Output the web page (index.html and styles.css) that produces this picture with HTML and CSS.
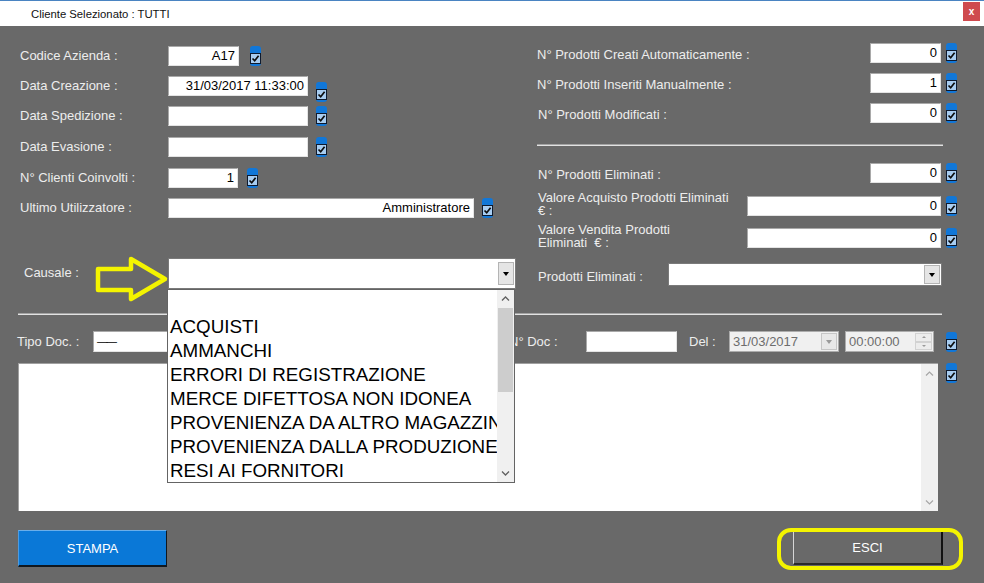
FILE: index.html
```html
<!DOCTYPE html>
<html lang="it">
<head>
    <meta charset="UTF-8">
    <title>Cliente Selezionato : TUTTI</title>
    <link rel="stylesheet" href="styles.css">
</head>
<body>
<div class="window">
    <div class="titlebar">
        <span class="title">Cliente Selezionato : TUTTI</span>
        <span class="close">x</span>
    </div>

    <div class="form">
        <div class="top">
            <!-- colonna sinistra -->
            <div class="col-left">
                <div class="row">
                    <span class="lbl">Codice Azienda :</span>
                    <div class="field w71">A17</div>
                    <span class="chk ml11"><span class="box"><svg viewBox="0 0 9 9"><path d="M1.5 4.5 3.7 6.8 7.6 1.8"/></svg></span></span>
                </div>
                <div class="row">
                    <span class="lbl">Data Creazione :</span>
                    <div class="field w140">31/03/2017 11:33:00</div>
                    <span class="chk ml8 low"><span class="box"><svg viewBox="0 0 9 9"><path d="M1.5 4.5 3.7 6.8 7.6 1.8"/></svg></span></span>
                </div>
                <div class="row">
                    <span class="lbl">Data Spedizione :</span>
                    <div class="field w140"></div>
                    <span class="chk ml8"><span class="box"><svg viewBox="0 0 9 9"><path d="M1.5 4.5 3.7 6.8 7.6 1.8"/></svg></span></span>
                </div>
                <div class="row mt11">
                    <span class="lbl">Data Evasione :</span>
                    <div class="field w140"></div>
                    <span class="chk ml8"><span class="box"><svg viewBox="0 0 9 9"><path d="M1.5 4.5 3.7 6.8 7.6 1.8"/></svg></span></span>
                </div>
                <div class="row mt11">
                    <span class="lbl">N° Clienti Coinvolti :</span>
                    <div class="field w70">1</div>
                    <span class="chk ml9"><span class="box"><svg viewBox="0 0 9 9"><path d="M1.5 4.5 3.7 6.8 7.6 1.8"/></svg></span></span>
                </div>
                <div class="row">
                    <span class="lbl">Ultimo Utilizzatore :</span>
                    <div class="field w306">Amministratore</div>
                    <span class="chk ml8"><span class="box"><svg viewBox="0 0 9 9"><path d="M1.5 4.5 3.7 6.8 7.6 1.8"/></svg></span></span>
                </div>
                <div class="row causale">
                    <span class="lbl lbl-causale">Causale :</span>
                    <div class="combo w347">
                        <span class="combo-btn"><span class="tri"></span></span>
                    </div>
                </div>
            </div>

            <!-- colonna destra -->
            <div class="col-right">
                <div class="row">
                    <span class="lbl">N° Prodotti Creati Automaticamente :</span>
                    <div class="grp">
                        <div class="field w71">0</div>
                        <span class="chk"><span class="box"><svg viewBox="0 0 9 9"><path d="M1.5 4.5 3.7 6.8 7.6 1.8"/></svg></span></span>
                    </div>
                </div>
                <div class="row mt9">
                    <span class="lbl">N° Prodotti Inseriti Manualmente :</span>
                    <div class="grp">
                        <div class="field w71">1</div>
                        <span class="chk"><span class="box"><svg viewBox="0 0 9 9"><path d="M1.5 4.5 3.7 6.8 7.6 1.8"/></svg></span></span>
                    </div>
                </div>
                <div class="row mt9">
                    <span class="lbl indent">N° Prodotti Modificati :</span>
                    <div class="grp">
                        <div class="field w71">0</div>
                        <span class="chk"><span class="box"><svg viewBox="0 0 9 9"><path d="M1.5 4.5 3.7 6.8 7.6 1.8"/></svg></span></span>
                    </div>
                </div>

                <div class="sep sep-right"></div>

                <div class="row mt16">
                    <span class="lbl indent">N° Prodotti Eliminati :</span>
                    <div class="grp">
                        <div class="field w71">0</div>
                        <span class="chk"><span class="box"><svg viewBox="0 0 9 9"><path d="M1.5 4.5 3.7 6.8 7.6 1.8"/></svg></span></span>
                    </div>
                </div>
                <div class="row mt12">
                    <span class="lbl indent two-lines">Valore Acquisto Prodotti Eliminati<br>€ :</span>
                    <div class="grp">
                        <div class="field w194">0</div>
                        <span class="chk"><span class="box"><svg viewBox="0 0 9 9"><path d="M1.5 4.5 3.7 6.8 7.6 1.8"/></svg></span></span>
                    </div>
                </div>
                <div class="row mt11">
                    <span class="lbl indent two-lines">Valore Vendita Prodotti<br>Eliminati&nbsp; € :</span>
                    <div class="grp">
                        <div class="field w194">0</div>
                        <span class="chk"><span class="box"><svg viewBox="0 0 9 9"><path d="M1.5 4.5 3.7 6.8 7.6 1.8"/></svg></span></span>
                    </div>
                </div>
                <div class="row combo-row">
                    <span class="lbl indent lbl-prod">Prodotti Eliminati :</span>
                    <div class="combo w274">
                        <span class="combo-btn small"><span class="tri"></span></span>
                    </div>
                </div>
            </div>
        </div>

        <div class="sep sep-full"></div>

        <div class="doc-row">
            <span class="lbl lbl-tipo">Tipo Doc. :</span>
            <div class="field tipo"><span class="dash">——</span></div>
            <span class="lbl lbl-ndoc">N° Doc :</span>
            <div class="field w91"></div>
            <span class="lbl lbl-del">Del :</span>
            <div class="picker date">
                <span>31/03/2017</span>
                <span class="pick-btn"><span class="tri grey"></span></span>
            </div>
            <div class="picker time">
                <span>00:00:00</span>
                <span class="spin"><span class="spin-up"></span><span class="spin-down"></span></span>
            </div>
            <span class="chk ml12"><span class="box"><svg viewBox="0 0 9 9"><path d="M1.5 4.5 3.7 6.8 7.6 1.8"/></svg></span></span>
        </div>

        <div class="notes-row">
            <div class="notes">
                <div class="vscroll light">
                    <svg viewBox="0 0 9 5"><path d="M1 4.5 4.5 1 8 4.5"/></svg>
                    <svg viewBox="0 0 9 5"><path d="M1 .5 4.5 4 8 .5"/></svg>
                </div>
            </div>
            <span class="chk ml8 top"><span class="box"><svg viewBox="0 0 9 9"><path d="M1.5 4.5 3.7 6.8 7.6 1.8"/></svg></span></span>
        </div>

        <div class="buttons">
            <div class="btn btn-stampa">STAMPA</div>
            <div class="btn btn-esci">ESCI</div>
        </div>
    </div>

    <!-- lista aperta della combo Causale -->
    <div class="dropdown">
        <ul class="dd-items">
            <li></li>
            <li>ACQUISTI</li>
            <li>AMMANCHI</li>
            <li>ERRORI DI REGISTRAZIONE</li>
            <li>MERCE DIFETTOSA NON IDONEA</li>
            <li>PROVENIENZA DA ALTRO MAGAZZINO</li>
            <li>PROVENIENZA DALLA PRODUZIONE</li>
            <li>RESI AI FORNITORI</li>
        </ul>
        <div class="dd-scroll">
            <span class="arrow-cell"><svg viewBox="0 0 9 5"><path d="M1 4.5 4.5 1 8 4.5"/></svg></span>
            <span class="thumb"></span>
            <span class="arrow-cell bottom"><svg viewBox="0 0 9 5"><path d="M1 .5 4.5 4 8 .5"/></svg></span>
        </div>
    </div>

    <!-- annotazioni gialle -->
    <svg class="arrow" viewBox="0 0 74 48" width="74" height="48">
        <polygon points="3,13 36,13 36,3 70,23 36,43 36,34 3,34"/>
    </svg>
    <div class="highlight"></div>
</div>
</body>
</html>
```

FILE: styles.css
```css
* {
    margin: 0;
    padding: 0;
    box-sizing: border-box;
}

body {
    background-color: #696969;
    font-family: "Liberation Sans", Arial, sans-serif;
    font-size: 13px;
    color: #ededed;
}

.window {
    position: relative;
    width: 984px;
    height: 583px;
    overflow: hidden;
    background-color: #696969;
}

/* barra del titolo */
.titlebar {
    height: 26px;
    background-color: #fff;
    border-top: 1px solid #4a84c2;
    display: flex;
    align-items: center;
    justify-content: space-between;
    padding-left: 31px;
}

.title {
    color: #111;
    font-size: 11.3px;
}

.close {
    align-self: flex-start;
    margin-top: 1px;
    margin-right: 4px;
    width: 17px;
    height: 19px;
    background-color: #cf4a4e;
    color: #fff;
    font-size: 10px;
    font-weight: bold;
    display: flex;
    align-items: center;
    justify-content: center;
}

.form {
    padding-left: 18px;
}

.top {
    display: flex;
}

.col-left {
    width: 519px;
    padding-top: 20px;
}

.col-right {
    width: 423px;
    padding-top: 16px;
}

.row {
    display: flex;
    align-items: center;
    height: 20px;
    margin-top: 10px;
}

.col-left .row:first-child,
.col-right .row:first-child {
    margin-top: 0;
}

.col-right .row {
    height: 21px;
    justify-content: space-between;
    padding-right: 3px;
}

.col-right .lbl {
    margin-top: 3px;
}

.mt9 { margin-top: 9px; }
.mt11 { margin-top: 11px; }
.mt12 { margin-top: 12px; }
.mt16 { margin-top: 16px; }

.lbl {
    white-space: nowrap;
}

.col-left .lbl {
    width: 150px;
    padding-left: 2px;
    margin-top: -2px;
}

.col-left .lbl-causale {
    padding-left: 6px;
}

.indent {
    padding-left: 1px;
}

.col-right .two-lines {
    line-height: 13.5px;
    margin-top: -3px;
}

.grp {
    display: flex;
    align-items: center;
}

/* campi di testo */
.field {
    height: 100%;
    background-color: #fff;
    color: #000;
    border-top: 1px solid #a9a9a9;
    border-left: 1px solid #a9a9a9;
    border-right: 1px solid #e4e4e4;
    border-bottom: 1px solid #e4e4e4;
    line-height: 18px;
    padding: 0 3px;
    text-align: right;
    white-space: nowrap;
    overflow: hidden;
}

.w70 { width: 70px; }
.w71 { width: 71px; }
.w91 { width: 91px; }
.w140 { width: 140px; }
.w194 { width: 194px; }
.w306 { width: 306px; }

/* checkbox con alone blu */
.chk {
    flex: none;
    display: block;
    width: 11px;
    height: 20px;
    padding-top: 7px;
    margin-left: 5px;
    background-color: #1177d8;
    border-radius: 3px;
}

.ml8 { margin-left: 8px; }
.ml9 { margin-left: 9px; }
.ml11 { margin-left: 11px; }
.ml12 { margin-left: 12px; }

.chk.low {
    align-self: flex-end;
    margin-bottom: -6px;
}

.chk.top {
    align-self: flex-start;
}

.box {
    display: block;
    width: 11px;
    height: 11px;
    border: 1px solid #0e1a2e;
    background-color: #a8cdf1;
}

.box svg {
    display: block;
    width: 9px;
    height: 9px;
}

.box path {
    fill: none;
    stroke: #0c0c0c;
    stroke-width: 1.7;
}

/* combo */
.combo {
    height: 100%;
    background-color: #fff;
    border: 1px solid #7a7a7a;
    display: flex;
    align-items: center;
    justify-content: flex-end;
    padding-right: 1px;
}

.w347 { width: 348px; }
.w274 { width: 274px; }

.causale {
    margin-top: 40px;
    height: 31px;
}

.combo-btn {
    width: 16px;
    height: 23px;
    background-color: #e5e5e5;
    border: 1px solid #b4b4b4;
    display: flex;
    align-items: center;
    justify-content: center;
}

.combo-btn.small {
    height: 19px;
}

.tri {
    width: 0;
    height: 0;
    border-left: 3.5px solid transparent;
    border-right: 3.5px solid transparent;
    border-top: 4px solid #000;
}

.tri.grey {
    border-top-color: #9a9a9a;
}

.combo-row {
    margin-top: 15px;
}

.col-right .combo-row {
    height: 23px;
    justify-content: flex-start;
}

.lbl-prod {
    width: 131px;
}

/* separatori */
.sep {
    height: 2px;
    border-top: 1px solid #a3a3a3;
    border-bottom: 1px solid #e2e2e2;
}

.sep-right {
    width: 406px;
    margin-top: 21px;
}

.sep-full {
    width: 924px;
    margin-top: 24px;
}

/* riga documento */
.doc-row {
    display: flex;
    align-items: center;
    height: 21px;
    margin-top: 16px;
    margin-left: -1px;
}

.lbl-tipo {
    width: 76px;
}

.field.tipo {
    width: 120px;
    text-align: left;
    padding-left: 3px;
}

.dash {
    font-size: 10.5px;
    letter-spacing: -1px;
    vertical-align: top;
}

.lbl-ndoc {
    margin-left: 296px;
    width: 77px;
}

.lbl-del {
    margin-left: 12px;
    width: 40px;
}

.picker {
    height: 100%;
    background-color: #f0f0f0;
    color: #6d6d6d;
    border: 1px solid #acacac;
    display: flex;
    align-items: center;
    justify-content: space-between;
    padding-left: 3px;
    padding-right: 1px;
}

.picker.date {
    width: 110px;
}

.picker.time {
    width: 89px;
    margin-left: 6px;
}

.pick-btn {
    width: 16px;
    height: 17px;
    background-color: #e8e8e8;
    border: 1px solid #c6c6c6;
    display: flex;
    align-items: center;
    justify-content: center;
}

.spin {
    width: 17px;
    height: 17px;
    display: flex;
    flex-direction: column;
}

.spin-up,
.spin-down {
    flex: 1;
    border: 1px solid #d2d2d2;
    background-color: #ececec;
    position: relative;
}

.spin-up::after,
.spin-down::after {
    content: "";
    position: absolute;
    left: 6px;
    top: 2px;
    border-left: 2px solid transparent;
    border-right: 2px solid transparent;
}

.spin-up::after {
    border-bottom: 2px solid #9a9a9a;
}

.spin-down::after {
    border-top: 2px solid #9a9a9a;
}

/* area note */
.notes-row {
    display: flex;
    margin-top: 11px;
}

.notes {
    width: 920px;
    height: 148px;
    background-color: #fff;
    border-top: 1px solid #a0a0a0;
    border-left: 1px solid #a0a0a0;
    display: flex;
    justify-content: flex-end;
}

.vscroll {
    width: 17px;
    background-color: #f0f0f0;
    display: flex;
    flex-direction: column;
    justify-content: space-between;
    align-items: center;
    padding: 7px 0 6px;
}

.vscroll svg,
.arrow-cell svg {
    width: 9px;
    height: 5px;
}

.vscroll path {
    fill: none;
    stroke: #a6a6a6;
    stroke-width: 1.2;
}

/* pulsanti */
.buttons {
    display: flex;
    align-items: flex-start;
    margin-top: 19px;
}

.btn {
    display: flex;
    align-items: center;
    justify-content: center;
    color: #fff;
    font-size: 13px;
}

.btn-stampa {
    width: 149px;
    height: 37px;
    background-color: #0a78d7;
    border-top: 1px solid #6aaeea;
    border-left: 1px solid #4c9be0;
    border-right: 1px solid #101820;
    border-bottom: 2px solid #101820;
}

.btn-esci {
    width: 150px;
    height: 33px;
    margin-top: 2px;
    margin-left: 626px;
    background-color: #696969;
    border-left: 1px solid #d6d6d6;
    border-right: 2px solid #111;
    border-bottom: 2px solid #2a2a2a;
}

/* lista aperta */
.dropdown {
    position: absolute;
    left: 167px;
    top: 289px;
    width: 348px;
    height: 194px;
    background-color: #fff;
    border: 1px solid #646464;
    display: flex;
}

.dd-items {
    list-style: none;
    flex: 1;
    overflow: hidden;
    padding-top: 1px;
}

.dd-items li {
    height: 24px;
    line-height: 24px;
    font-size: 18.8px;
    color: #000;
    padding-left: 2px;
    white-space: nowrap;
    overflow: hidden;
}

.dd-scroll {
    width: 17px;
    background-color: #f0f0f0;
    display: flex;
    flex-direction: column;
}

.arrow-cell {
    height: 17px;
    display: flex;
    align-items: center;
    justify-content: center;
}

.arrow-cell.bottom {
    margin-top: auto;
}

.arrow-cell path {
    fill: none;
    stroke: #606060;
    stroke-width: 1.3;
}

.thumb {
    display: block;
    height: 84px;
    margin: 1px 1px 0;
    background-color: #cdcdcd;
}

/* annotazioni */
.arrow {
    position: absolute;
    left: 95px;
    top: 256px;
}

.arrow polygon {
    fill: none;
    stroke: #f4f400;
    stroke-width: 4.5;
    stroke-linejoin: round;
}

.highlight {
    position: absolute;
    left: 777px;
    top: 528px;
    width: 186px;
    height: 42px;
    border: 4px solid #f4f400;
    border-radius: 14px;
}
```
